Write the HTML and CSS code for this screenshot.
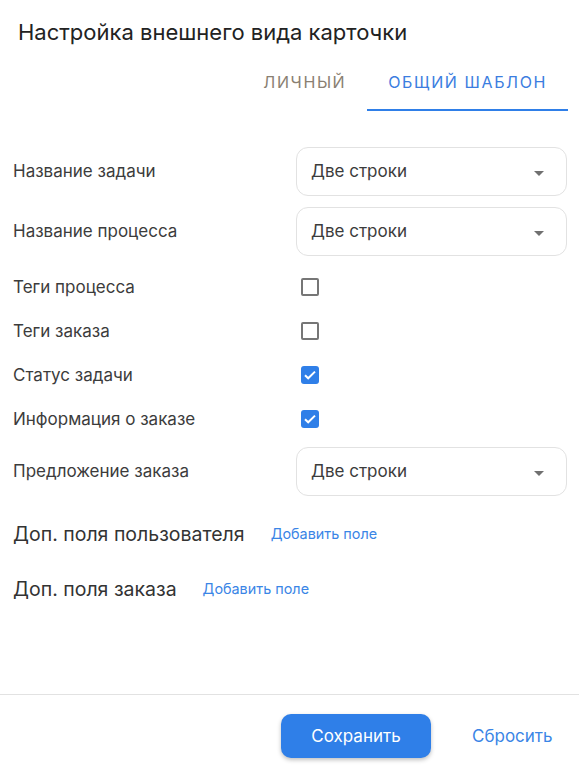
FILE: index.html
```html
<!DOCTYPE html>
<html lang="ru">
<head>
<meta charset="utf-8">
<title>Настройка внешнего вида карточки</title>
<link rel="stylesheet" href="styles.css">
</head>
<body>
<div class="dialog">
  <h1 class="title">Настройка внешнего вида карточки</h1>
  <div class="tabs">
    <div class="tab">Личный</div>
    <div class="tab active">Общий шаблон</div>
  </div>
  <div class="form">
    <div class="row row-select">
      <span class="label">Название задачи</span>
      <div class="select"><span>Две строки</span><i class="caret"></i></div>
    </div>
    <div class="row row-select">
      <span class="label">Название процесса</span>
      <div class="select"><span>Две строки</span><i class="caret"></i></div>
    </div>
    <div class="row row-check first-check">
      <span class="label">Теги процесса</span>
      <span class="checkbox"></span>
    </div>
    <div class="row row-check">
      <span class="label">Теги заказа</span>
      <span class="checkbox"></span>
    </div>
    <div class="row row-check">
      <span class="label">Статус задачи</span>
      <span class="checkbox checked"><svg viewBox="0 0 18 18" width="18" height="18"><path d="M4 9.2l3.2 3.1L14 5.6" fill="none" stroke="#fff" stroke-width="2"/></svg></span>
    </div>
    <div class="row row-check">
      <span class="label">Информация о заказе</span>
      <span class="checkbox checked"><svg viewBox="0 0 18 18" width="18" height="18"><path d="M4 9.2l3.2 3.1L14 5.6" fill="none" stroke="#fff" stroke-width="2"/></svg></span>
    </div>
    <div class="row row-select">
      <span class="label">Предложение заказа</span>
      <div class="select"><span>Две строки</span><i class="caret"></i></div>
    </div>
  </div>
  <div class="extra">
    <div class="extra-row"><span class="extra-title">Доп. поля пользователя</span><a class="link" href="#">Добавить поле</a></div>
    <div class="extra-row"><span class="extra-title">Доп. поля заказа</span><a class="link" href="#">Добавить поле</a></div>
  </div>
  <div class="footer">
    <button class="btn-primary">Сохранить</button>
    <button class="btn-text">Сбросить</button>
  </div>
</div>
</body>
</html>
```
FILE: styles.css
```css
* { box-sizing: border-box; }
html, body { margin: 0; padding: 0; background: #fff; }
body { font-family: Inter, "Noto Sans", sans-serif; color: #333; }
.dialog { width: 579px; height: 770px; display: flex; flex-direction: column; }
.title { margin: 0; padding: 18px 18px 0; font-size: 22px; font-weight: 400; line-height: 28px; color: #222; }
.tabs { display: flex; justify-content: flex-end; padding-right: 11px; margin-top: 9px; }
.tab { padding: 0 21px; height: 56px; display: flex; align-items: center; font-size: 16px; letter-spacing: 1.6px; text-transform: uppercase; color: #8a7f72; border-bottom: 2px solid transparent; }
.tab.active { color: #3b7de0; border-bottom-color: #2f7fe8; }
.form { display: flex; flex-direction: column; padding: 0 12px 0 13px; margin-top: 30px; }
.row { display: flex; align-items: center; }
.label { width: 283px; flex: none; font-size: 17px; color: #3c3c3c; }
.row-select { height: 60px; }
.row-check { height: 44px; }
.first-check { margin-top: 4px; }
.select { flex: 1; height: 49px; border: 1px solid #e2e2e2; border-radius: 12px; display: flex; align-items: center; justify-content: space-between; padding: 0 22px 0 14px; font-size: 17px; color: #3c3c3c; }
.caret { width: 0; height: 0; border-left: 5px solid transparent; border-right: 5px solid transparent; border-top: 5px solid #707070; margin-top: 4px; }
.checkbox { width: 18px; height: 18px; margin-left: 5px; border: 2px solid #767676; border-radius: 2px; display: flex; align-items: center; justify-content: center; }
.checkbox.checked { border: none; background: #2f7fe8; border-radius: 3px; }
.extra { display: flex; flex-direction: column; padding-left: 13px; margin-top: 5px; }
.extra-row { height: 55px; display: flex; align-items: center; gap: 26px; }
.extra-title { font-size: 19.5px; color: #333; }
.link { font-size: 14.4px; color: #3a85e6; text-decoration: none; }
.footer { margin-top: auto; border-top: 1px solid #e2e2e2; height: 76px; display: flex; align-items: center; padding-left: 281px; gap: 0; }
.btn-primary { width: 150px; height: 44px; border: none; border-radius: 10px; background: #2f7fe8; color: #fff; font-family: inherit; font-size: 17px; box-shadow: 0 2px 4px rgba(0,0,0,0.25); margin-top: 7px; }
.btn-text { background: none; border: none; color: #3a85e6; font-family: inherit; font-size: 17px; margin-left: 35px; padding: 0 6px; margin-top: 7px; }
```
